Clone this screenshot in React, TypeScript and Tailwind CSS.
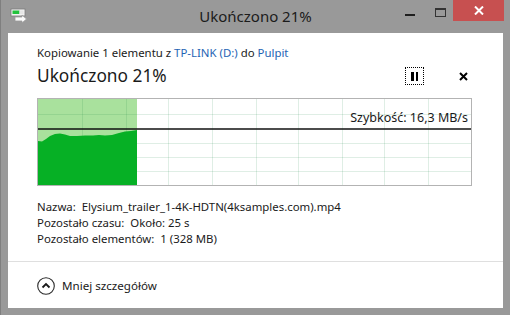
import React from 'react'

const font = { fontFamily: '"Noto Sans", "Open Sans", Arial, sans-serif' }

function CopyIcon() {
  return (
    <svg width="18" height="18" viewBox="0 0 18 18">
      <rect x="1" y="2" width="14" height="7" fill="#f2f2f2" stroke="#7c7c7c" strokeWidth="0.8" />
      <rect x="2.5" y="3.5" width="7" height="3.5" fill="#22c23c" />
      <rect x="9.5" y="3.5" width="4" height="3.5" fill="#e6e6e6" />
      <path d="M5 10 H12 V8 L16.5 12 L12 16 V14 H5 Z" fill="#fafafa" stroke="#9a9a9a" strokeWidth="0.8" />
    </svg>
  )
}

function Graph() {
  const vx = [45, 89, 131, 175, 219, 261, 305, 347, 391]
  const hy = [16, 45, 59, 73]
  const curve =
    'M1 43 L5 43.5 L9 41 L13 38 L18 36 L23 35.5 L28 36.5 L33 38 L40 38 L48 37.5 L56 37.5 L62 37 L68 37.5 L75 37 L82 35 L88 33.5 L94 33 L100 32 L100 87 L1 87 Z'
  return (
    <div className="relative w-[435px] h-[88px]">
      <svg width="435" height="88" viewBox="0 0 435 88" className="block">
        <rect x="0.5" y="0.5" width="434" height="87" fill="#ffffff" stroke="#b3b3b3" />
        <rect x="1" y="1" width="99" height="86" fill="#a9e19d" />
        {vx.map((x) => (
          <line key={'v' + x} x1={x + 0.5} y1="1" x2={x + 0.5} y2="87" stroke="#1f8a45" strokeOpacity="0.14" />
        ))}
        {hy.map((y) => (
          <line key={'h' + y} x1="1" y1={y + 0.5} x2="434" y2={y + 0.5} stroke="#1f8a45" strokeOpacity="0.14" />
        ))}
        <path d={curve} fill="#06b025" />
        <line x1="1" y1="31" x2="434" y2="31" stroke="#111" strokeWidth="1.4" />
      </svg>
      <span className="absolute right-[4px] top-[12px] text-[12.5px] leading-[16px] text-[#1a1a1a]">
        Szybkość: 16,3 MB/s
      </span>
    </div>
  )
}

export default function App() {
  return (
    <div className="w-[510px] h-[315px] bg-[#999999] flex flex-col overflow-hidden border-l border-[#7f7f7f]" style={font}>
      {/* title bar */}
      <div className="h-[33px] flex items-start relative">
        <div className="pl-[9px] pt-[7px]">
          <CopyIcon />
        </div>
        <div className="absolute left-0 right-0 top-[6px] text-center text-[15px] leading-[20px] text-[#1b1b1b]">
          Ukończono 21%
        </div>
        <div className="ml-auto flex items-start mr-[6px]">
          <div className="w-[30px] h-[21px] flex items-center justify-center">
            <div className="w-[10px] h-[2px] bg-[#1e1e1e] mt-[8px]" />
          </div>
          <div className="w-[18px] h-[21px] flex items-start justify-center pt-[8px] ml-[6px]">
            <div className="w-[11px] h-[9px] border border-[#333] border-t-2" />
          </div>
          <div className="w-[51px] h-[21px] bg-[#c75050] flex items-center justify-center ml-[4px]">
            <svg width="10" height="9" viewBox="0 0 10 9">
              <path d="M1 0.5 L9 8.5 M9 0.5 L1 8.5" stroke="#fff" strokeWidth="2" />
            </svg>
          </div>
        </div>
      </div>

      {/* content */}
      <div className="mx-[7px] h-[275px] bg-white flex flex-col">
        <div className="pl-[29px] pr-[30px] pt-[12px]">
          <div className="text-[11.4px] leading-[16px] text-[#1a1a1a]">
            Kopiowanie 1 elementu z <span className="text-[#1e64b4]">TP-LINK (D:)</span> do{' '}
            <span className="text-[#1e64b4]">Pulpit</span>
          </div>
          <div className="flex items-center mt-[3px] h-[24px]">
            <div className="text-[17.3px] leading-[24px] text-[#1a1a1a]">Ukończono 21%</div>
            <div className="ml-auto flex items-center">
              <div className="w-[19px] h-[18px] border border-dotted border-black flex items-center justify-center gap-[2px]">
                <div className="w-[2.5px] h-[9px] bg-black" />
                <div className="w-[2.5px] h-[9px] bg-black" />
              </div>
              <div className="w-[19px] flex items-center justify-center ml-[30px]">
                <svg width="9" height="9" viewBox="0 0 9 9">
                  <path d="M1 1 L8 8 M8 1 L1 8" stroke="#000" strokeWidth="2" />
                </svg>
              </div>
            </div>
          </div>
          <div className="mt-[10px]">
            <Graph />
          </div>
          <div className="mt-[13px] text-[11.4px] leading-[16px] text-[#1a1a1a] flex flex-col">
            <div>Nazwa:&nbsp; Elysium_trailer_1-4K-HDTN(4ksamples.com).mp4</div>
            <div>Pozostało czasu:&nbsp; Około: 25 s</div>
            <div>Pozostało elementów:&nbsp; 1 (328 MB)</div>
          </div>
        </div>
        <div className="mt-[14px] h-px bg-[#dfdfdf]" />
        <div className="pl-[29px] flex items-center gap-[7px] mt-[15px]">
          <svg width="18" height="18" viewBox="0 0 18 18">
            <circle cx="9" cy="9" r="8.3" fill="none" stroke="#2b2b2b" strokeWidth="1.1" />
            <path d="M5.5 10.5 L9 7 L12.5 10.5" fill="none" stroke="#1a1a1a" strokeWidth="1.8" />
          </svg>
          <span className="text-[11.6px] leading-[16px] text-[#1a1a1a]">Mniej szczegółów</span>
        </div>
      </div>
    </div>
  )
}
